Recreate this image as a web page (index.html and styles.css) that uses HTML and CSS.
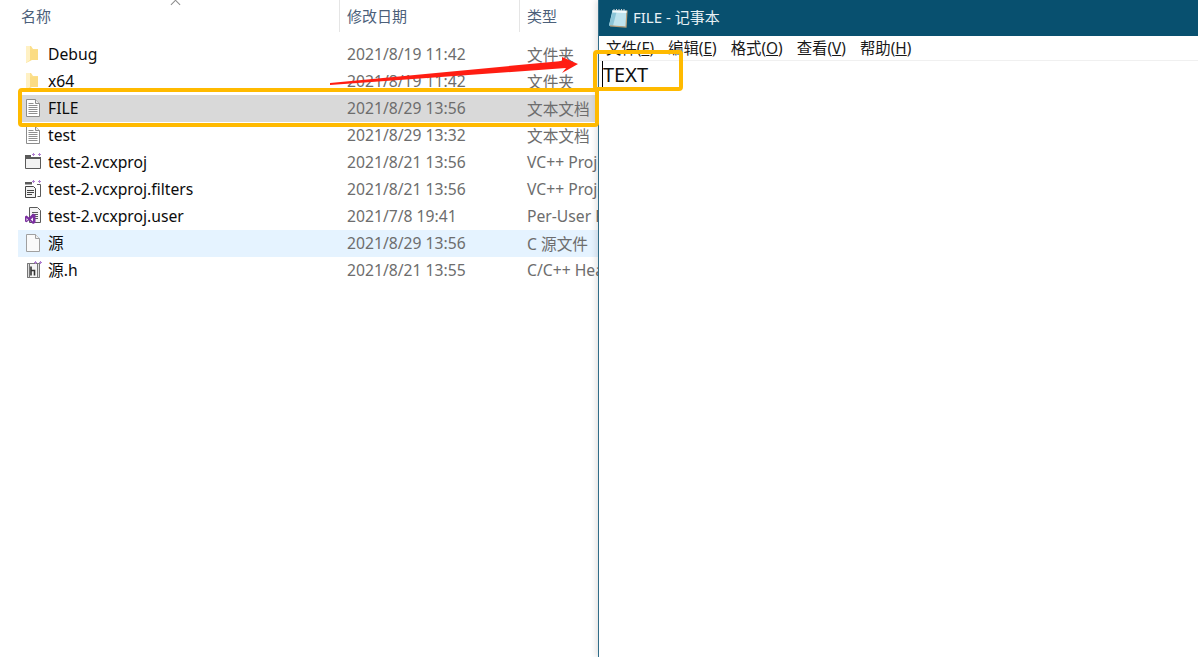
FILE: index.html
```html
<!DOCTYPE html>
<html lang="zh-CN">
<head>
<meta charset="utf-8">
<title>FILE - 记事本</title>
<link rel="stylesheet" href="styles.css">
</head>
<body>
<svg class="defs" width="0" height="0" aria-hidden="true">
  <defs>
    <symbol id="folder" viewBox="0 0 20 18">
      <path d="M3 1h5l2 3h5v11H9l-6 3z" fill="#fbdf8c"/>
      <path d="M3 1h4v14l-4 3z" fill="#fff1c4"/>
      <path d="M7 5h8v10H7z" fill="#fbdc83"/>
    </symbol>
    <symbol id="txt" viewBox="0 0 20 18">
      <path d="M3.500.5h9l4 4v13h-13z" fill="#fff" stroke="#8c8c8c"/>
      <path d="M12.500.5v4h4" fill="#eee" stroke="#8c8c8c"/>
      <path d="M5.500 4.500h5M5.500 6.500h9M5.500 8.500h9M5.500 10.500h9M5.500 12.500h9M5.500 14.500h9" stroke="#8f8f8f"/>
    </symbol>
    <symbol id="blank" viewBox="0 0 20 18">
      <path d="M3.500.5h9l4 4v13h-13z" fill="#fafafa" stroke="#a0a0a0"/>
      <path d="M12.500.5v4h4" fill="#f0f0f0" stroke="#a0a0a0"/>
    </symbol>
    <symbol id="proj" viewBox="0 0 20 18">
      <path d="M2.500 4.500h15v11h-15z" fill="#f2f2f2" stroke="#5a5a5a"/>
      <path d="M2 2h6v2.500H2zM2 4h16v2H2z" fill="#5a5a5a"/>
      <path d="M10 0h1v1h1v1h-1v1h-1V2H9V1h1zM16 0h1v1h1v1h-1v1h-1V2h-1V1h1z" fill="#b07fd0"/>
    </symbol>
    <symbol id="filters" viewBox="0 0 20 18">
      <path d="M2 2h7v2.500H2z" fill="#5a5a5a"/>
      <path d="M14 4.500h3.500v12h-3" fill="none" stroke="#5a5a5a"/>
      <path d="M2.500 6.500h8l2 2v9h-10z" fill="#f2f2f2" stroke="#444"/>
      <path d="M4 10.500h7M4 12.500h7M4 14.500h5" stroke="#444"/>
      <path d="M10 0h1v1h1v1h-1v1h-1V2H9V1h1zM16 0h1v1h1v1h-1v1h-1V2h-1V1h1z" fill="#b07fd0"/>
    </symbol>
    <symbol id="user" viewBox="0 0 20 18">
      <path d="M6.500.5h8l3 3v12h-11z" fill="#f5f5f5" stroke="#5a5a5a"/>
      <path d="M9 5.500h6M9 7.500h6M11 9.500h4M12 11.500h3" stroke="#5a5a5a"/>
      <path d="M10 6.500l2.500 1.300v7.900l-2.500 1.300-4-3.700-2.500 1.900-1.500-.8v-5l1.500-.8 2.500 1.900z" fill="#7b2fa0"/>
      <path d="M10 10.500l-2.300 2 2.300 2zM3.500 11v3l1.500-1.500z" fill="#f5f5f5"/>
    </symbol>
    <symbol id="header" viewBox="0 0 20 18">
      <path d="M4.500 2.500h12v14h-12z" fill="#f5f5f5" stroke="#777"/>
      <path d="M4.500 2.500h2v14h-2zM14.500 2.500h2v14h-2z" fill="#ddd" stroke="#777"/>
      <path d="M8 5.500v9M8 9.500h3.500v5" fill="none" stroke="#333" stroke-width="1.600"/>
      <path d="M12 0h1v1h1v1h-1v1h-1V2h-1V1h1zM17 0h1v1h1v1h-1v1h-1V2h-1V1h1z" fill="#b07fd0"/>
    </symbol>
    <symbol id="notepad" viewBox="0 0 20 20">
      <path d="M4.500 2L19 2.500 18 19 1 17.500z" fill="#bfe3ee"/>
      <path d="M5 2L9 2.200 5 17.800 1 17.500z" fill="#8cc5d8"/>
      <path d="M19 2.500L18 19 2 17.800" fill="none" stroke="#b89f7a" stroke-width="1.200"/>
      <path d="M4.500 3.500l14 .5" stroke="#f2fafc" stroke-width="2"/>
      <path d="M6 1v2M8.500 1v2M11 1v2M13.500 1v2M16 1v2" stroke="#d6d6d6"/>
    </symbol>
  </defs>
</svg>

<main class="desktop">
  <section class="explorer">
    <span class="sort-caret"></span>
    <header class="list-head">
      <div class="col col-name">名称</div>
      <div class="col col-date">修改日期</div>
      <div class="col col-type">类型</div>
    </header>
    <div class="rows">
      <div class="row">
        <span class="cell-name"><svg class="ico"><use href="#folder"/></svg><span class="fname">Debug</span></span>
        <span class="cell-date">2021/8/19 11:42</span><span class="cell-type">文件夹</span>
      </div>
      <div class="row">
        <span class="cell-name"><svg class="ico"><use href="#folder"/></svg><span class="fname">x64</span></span>
        <span class="cell-date">2021/8/19 11:42</span><span class="cell-type">文件夹</span>
      </div>
      <div class="row row-selected">
        <span class="cell-name"><svg class="ico"><use href="#txt"/></svg><span class="fname">FILE</span></span>
        <span class="cell-date">2021/8/29 13:56</span><span class="cell-type">文本文档</span>
      </div>
      <div class="row">
        <span class="cell-name"><svg class="ico"><use href="#txt"/></svg><span class="fname">test</span></span>
        <span class="cell-date">2021/8/29 13:32</span><span class="cell-type">文本文档</span>
      </div>
      <div class="row">
        <span class="cell-name"><svg class="ico"><use href="#proj"/></svg><span class="fname">test-2.vcxproj</span></span>
        <span class="cell-date">2021/8/21 13:56</span><span class="cell-type">VC++ Project</span>
      </div>
      <div class="row">
        <span class="cell-name"><svg class="ico"><use href="#filters"/></svg><span class="fname">test-2.vcxproj.filters</span></span>
        <span class="cell-date">2021/8/21 13:56</span><span class="cell-type">VC++ Project</span>
      </div>
      <div class="row">
        <span class="cell-name"><svg class="ico"><use href="#user"/></svg><span class="fname">test-2.vcxproj.user</span></span>
        <span class="cell-date">2021/7/8 19:41</span><span class="cell-type">Per-User Project</span>
      </div>
      <div class="row row-hover">
        <span class="cell-name"><svg class="ico"><use href="#blank"/></svg><span class="fname">源</span></span>
        <span class="cell-date">2021/8/29 13:56</span><span class="cell-type">C 源文件</span>
      </div>
      <div class="row">
        <span class="cell-name"><svg class="ico"><use href="#header"/></svg><span class="fname">源.h</span></span>
        <span class="cell-date">2021/8/21 13:55</span><span class="cell-type">C/C++ Header</span>
      </div>
    </div>
  </section>

  <section class="notepad">
    <header class="np-title">
      <svg class="np-icon"><use href="#notepad"/></svg>
      <span class="np-name">FILE - 记事本</span>
    </header>
    <nav class="np-menu">
      <span>文件(<u>F</u>)</span>
      <span>编辑(<u>E</u>)</span>
      <span>格式(<u>O</u>)</span>
      <span>查看(<u>V</u>)</span>
      <span>帮助(<u>H</u>)</span>
    </nav>
    <div class="np-body"><span class="np-text">TEXT</span></div>
  </section>

  <div class="mark mark-row"></div>
  <div class="mark mark-text"></div>
  <svg class="arrow" width="260" height="40" viewBox="0 0 260 40">
    <path d="M0 29L232 7 232 3 248 10 232 19 236 14 0 31z" fill="#ff1d12"/>
  </svg>
</main>
</body>
</html>
```
FILE: styles.css
```css
* { box-sizing: border-box; }
html, body { margin: 0; height: 100%; overflow: hidden; background: #fff; }
body { font-family: "Noto Sans", "Noto Sans CJK SC", sans-serif; }
.defs { position: absolute; }

.desktop { position: relative; display: flex; width: 1198px; height: 657px; }

.explorer { position: relative; flex: 0 0 598px; overflow: hidden; }
.sort-caret {
  position: absolute; left: 172px; top: 1px; width: 7px; height: 7px;
  border-left: 1px solid #8a8a8a; border-top: 1px solid #8a8a8a;
  transform: rotate(45deg);
}
.list-head { display: flex; height: 32px; color: #4c607a; font-size: 15px; }
.col { display: flex; align-items: center; height: 32px; padding-bottom: 2px; }
.col-name { width: 339px; padding-left: 21px; }
.col-date { width: 180px; padding-left: 7px; border-left: 1px solid #e5e5e5; }
.col-type { flex: 1; padding-left: 7px; border-left: 1px solid #e5e5e5; }

.rows { display: flex; flex-direction: column; padding: 9px 0 0 18px; }
.row { display: flex; align-items: center; height: 27px; padding-bottom: 1px; font-size: 15.700px; white-space: nowrap; }
.row-selected { background: #d9d9d9; }
.row-hover { background: #e5f3ff; }
.cell-name { flex: none; display: flex; align-items: center; width: 329px; color: #0c0c0c; }
.ico { flex: none; width: 20px; height: 18px; margin: 0 5px 0 5px; }
.fname { line-height: 26px; }
.cell-date { flex: none; width: 180px; color: #6d6d6d; }
.cell-type { flex: none; color: #6d6d6d; }

.notepad { flex: 1; display: flex; flex-direction: column; border-left: 1px solid #2f6c88; background: #fff; box-shadow: -2px 0 6px rgba(0, 0, 0, .12); z-index: 1; }
.np-title { display: flex; align-items: center; gap: 5px; height: 36px; padding-left: 9px; background: #08506f; color: #e8f1f5; font-size: 15px; }
.np-name { padding-bottom: 3px; }
.np-icon { width: 20px; height: 20px; }
.np-menu { display: flex; gap: 14px; height: 25px; padding: 0 0 2px 7px; align-items: center; border-bottom: 1px solid #f0f0f0; font-size: 15.400px; color: #1a1a1a; }
.np-body { flex: 1; padding: 0 0 0 3px; }
.np-text { display: inline-block; height: 26px; border-left: 1px solid #000; font-size: 20px; line-height: 28px; color: #111; }

.mark { position: absolute; border: 4px solid #ffba00; border-radius: 4px; z-index: 2; }
.mark-row { left: 18px; top: 88px; width: 581px; height: 39px; }
.mark-text { left: 593px; top: 50px; width: 90px; height: 41px; }
.arrow { position: absolute; left: 330px; top: 54px; z-index: 2; }
```
